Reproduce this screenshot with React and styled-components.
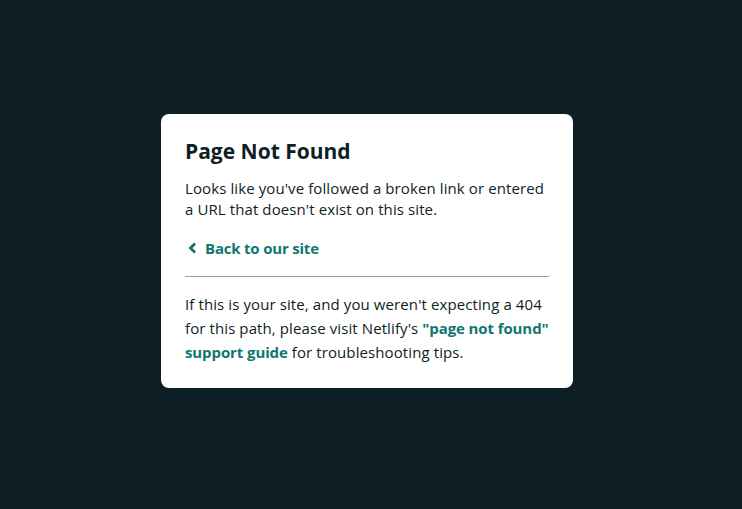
import styled, { createGlobalStyle } from 'styled-components';

const GlobalStyle = createGlobalStyle`
  html, body {
    margin: 0;
    padding: 0;
    background: #0e1e25;
  }
  body {
    font-family: 'Open Sans', 'Noto Sans', sans-serif;
    -webkit-font-smoothing: antialiased;
  }
`;

const Page = styled.main`
  min-height: 509px;
  box-sizing: border-box;
  display: flex;
  align-items: center;
  justify-content: center;
  padding: 0 8px 8px 0;
`;

const Card = styled.div`
  width: 412px;
  box-sizing: border-box;
  background: #fff;
  border-radius: 8px;
  padding: 24px;
  color: #0e1e25;
`;

const Title = styled.h1`
  margin: 0;
  font-size: 21px;
  line-height: 26px;
  font-weight: 700;
  color: #0e1e25;
`;

const Text = styled.p`
  margin: ${(p) => p.$top || 0}px 0 0;
  font-size: 15px;
  line-height: ${(p) => p.$lh || 24}px;
  letter-spacing: 0.1px;
`;

const Link = styled.a`
  color: #107770;
  font-weight: 700;
  text-decoration: none;
  letter-spacing: -0.1px;
`;

const BackLink = styled(Link)`
  display: flex;
  align-items: center;
  gap: 8px;
  margin-top: 16px;
  line-height: 24px;
  font-size: 15px;
  letter-spacing: -0.2px;
  padding-left: 3px;
`;

const Rule = styled.hr`
  border: 0;
  height: 1px;
  background: #9c9c9c;
  margin: 16px 0 15px;
`;

function Chevron() {
  return (
    <svg width="9" height="12" viewBox="0 0 9 12">
      <path d="M7 1.5L2.5 6L7 10.5" fill="none" stroke="#107770" strokeWidth="2.8" />
    </svg>
  );
}

export default function App() {
  return (
    <>
      <GlobalStyle />
      <Page>
        <Card>
          <Title>Page Not Found</Title>
          <Text $top={14} $lh={21}>
            Looks like you've followed a broken link or entered a URL that doesn't exist on this site.
          </Text>
          <BackLink href="#">
            <Chevron />
            Back to our site
          </BackLink>
          <Rule />
          <Text>
            If this is your site, and you weren't expecting a 404 for this path, please visit
            Netlify's <Link href="#">"page not found" support guide</Link> for troubleshooting tips.
          </Text>
        </Card>
      </Page>
    </>
  );
}
